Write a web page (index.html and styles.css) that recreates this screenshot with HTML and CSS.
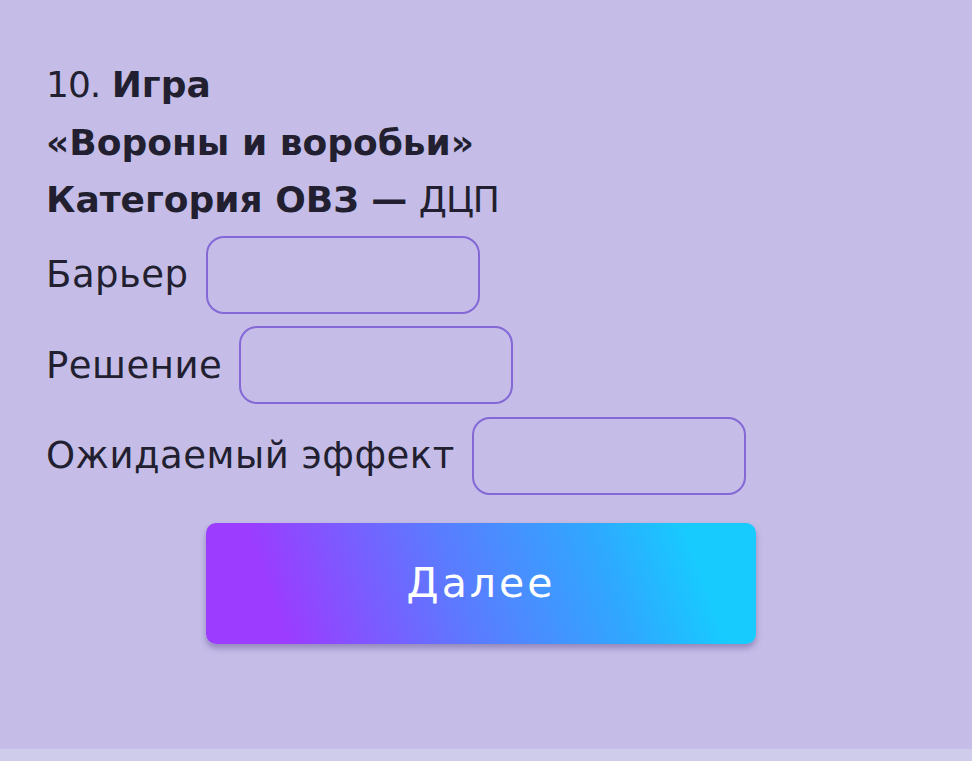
FILE: index.html
```html
<!DOCTYPE html>
<html lang="ru">
<head>
  <meta charset="UTF-8">
  <meta name="viewport" content="width=device-width, initial-scale=1.0">
  <title>Игра — карточка</title>
  <link rel="stylesheet" href="styles.css">
</head>
<body>
  <div class="page">
    <div class="card">
      <h2 class="game-title">
        <span class="num">10.</span> <strong>Игра</strong><br>
        <strong>«Вороны и воробьи»</strong><br>
        <strong>Категория ОВЗ —</strong> <span class="num">ДЦП</span>
      </h2>

      <form class="fields">
        <label class="field">
          <span class="field-name">Барьер</span>
          <input type="text" class="field-input">
        </label>
        <label class="field">
          <span class="field-name">Решение</span>
          <input type="text" class="field-input">
        </label>
        <label class="field">
          <span class="field-name">Ожидаемый эффект</span>
          <input type="text" class="field-input">
        </label>

        <button type="button" class="next-btn">Далее</button>
      </form>
    </div>
    <div class="bottom-strip"></div>
  </div>
</body>
</html>
```
FILE: styles.css
```css
* { margin: 0; padding: 0; box-sizing: border-box; }

body {
  font-family: 'DejaVu Sans', sans-serif;
  background-color: #ffffff;
  color: #221f30;
}

.page { width: 100%; height: 100vh; display: flex; flex-direction: column; }

.card {
  background-color: #c5bde8;
  height: 749px;
  padding: 56px 46px 0;
}

.bottom-strip {
  height: 12px;
  background-color: #cfcbea;
}

.game-title {
  font-size: 36px;
  line-height: 57.5px;
  font-weight: 400;
}
.game-title strong { font-weight: 700; }
.game-title .num { letter-spacing: -1px; }

.fields {
  display: flex;
  flex-direction: column;
  align-items: flex-start;
  margin-top: 7px;
}

.field {
  display: flex;
  align-items: center;
  gap: 17px;
  font-size: 37px;
  letter-spacing: 0.5px;
  margin-bottom: 12.5px;
}

.field-input {
  width: 274px;
  height: 78px;
  border: 2px solid #8468d6;
  border-radius: 18px;
  background: transparent;
  outline: none;
}

.next-btn {
  align-self: flex-start;
  margin: 15.5px 0 0 160px;
  width: 550px;
  height: 121px;
  border: none;
  border-radius: 10px;
  background: linear-gradient(70deg, #9b3cff 14%, #5c7aff 45%, #2fa8ff 72%, #17cbff 88%);
  box-shadow: 0 4px 6px rgba(70, 50, 120, 0.4);
  color: #ffffff;
  font-family: 'DejaVu Sans', sans-serif;
  font-size: 41px;
  letter-spacing: 3px;
  cursor: pointer;
}
```
